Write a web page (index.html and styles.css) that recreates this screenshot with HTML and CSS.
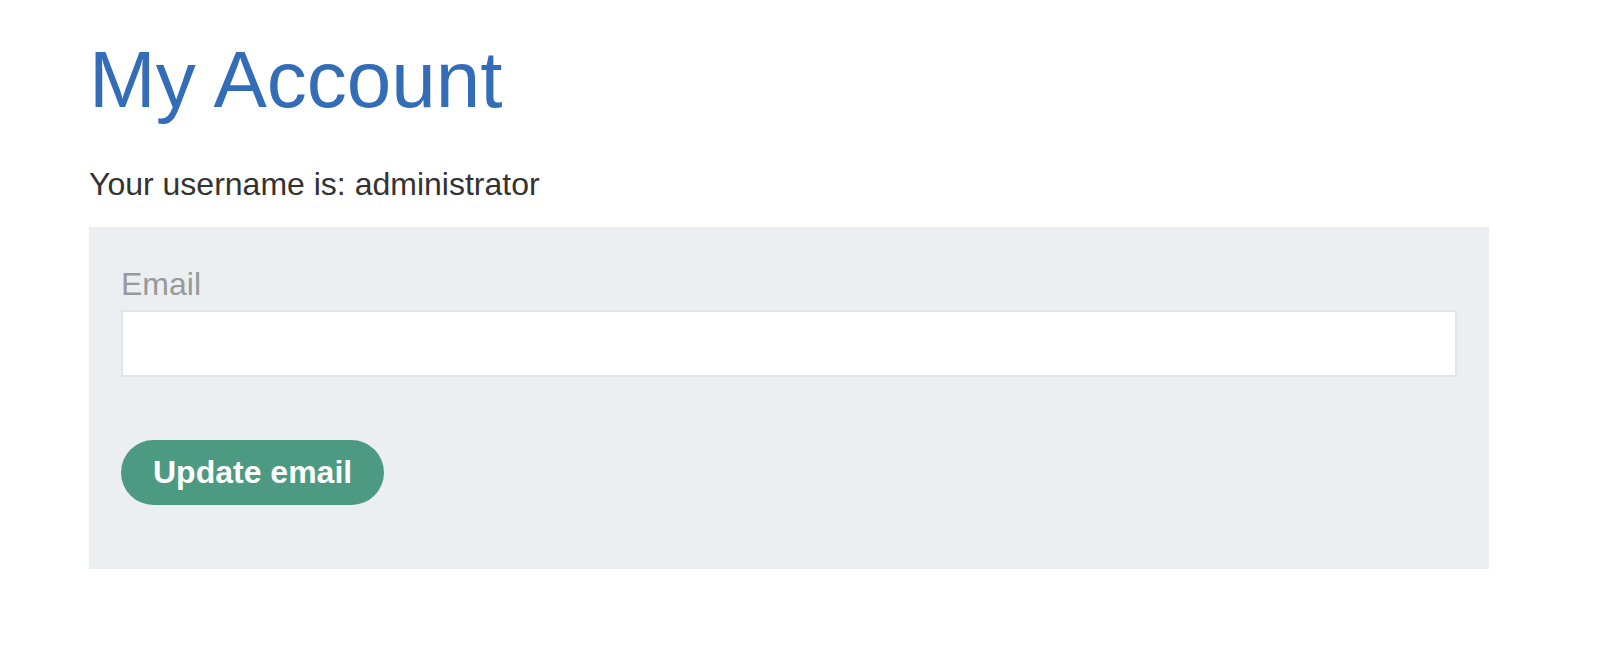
FILE: index.html
```html
<!DOCTYPE html>
<html lang="en">
<head>
    <meta charset="UTF-8">
    <meta name="viewport" content="width=device-width, initial-scale=1.0">
    <title>My Account</title>
    <link rel="stylesheet" href="styles.css">
</head>
<body>
    <div class="container">
        <h1>My Account</h1>
        <p class="username">Your username is: administrator</p>

        <!-- Formulário de troca de email -->
        <form class="panel" id="change-email-form">
            <label for="email">Email</label>
            <input type="email" id="email" name="email">
            <button type="button" class="button">Update email</button>
        </form>
    </div>
</body>
</html>
```

FILE: styles.css
```css
/* Base */
body {
    margin: 0;
    background-color: #fff;
    font-family: 'Liberation Sans', Arial, sans-serif;
    color: #333332;
}

/* Container principal */
.container {
    width: 1400px;
    padding: 34px 0 0 89px;
}

/* Título */
h1 {
    margin: 0;
    font-size: 80px;
    font-weight: normal;
    color: #336db8;
}

.username {
    margin: 40px 0 24px;
    font-size: 32px;
}

/* Painel do formulário */
.panel {
    display: flex;
    flex-direction: column;
    align-items: flex-start;
    background-color: #ebeff2;
    padding: 39px 32px 64px;
}

label {
    font-size: 32px;
    color: #999;
}

input {
    box-sizing: border-box;
    width: 100%;
    height: 67px;
    margin-top: 7px;
    border: 2px solid #e2e5e8;
    background-color: #fff;
    font-size: 32px;
    font-family: inherit;
}

/* Botão */
.button {
    height: 65px;
    margin-top: 63px;
    padding: 0 32px;
    border: none;
    border-radius: 33px;
    background-color: #4c9a82;
    color: #fff;
    font-family: inherit;
    font-size: 32px;
    font-weight: bold;
    cursor: pointer;
}
```
